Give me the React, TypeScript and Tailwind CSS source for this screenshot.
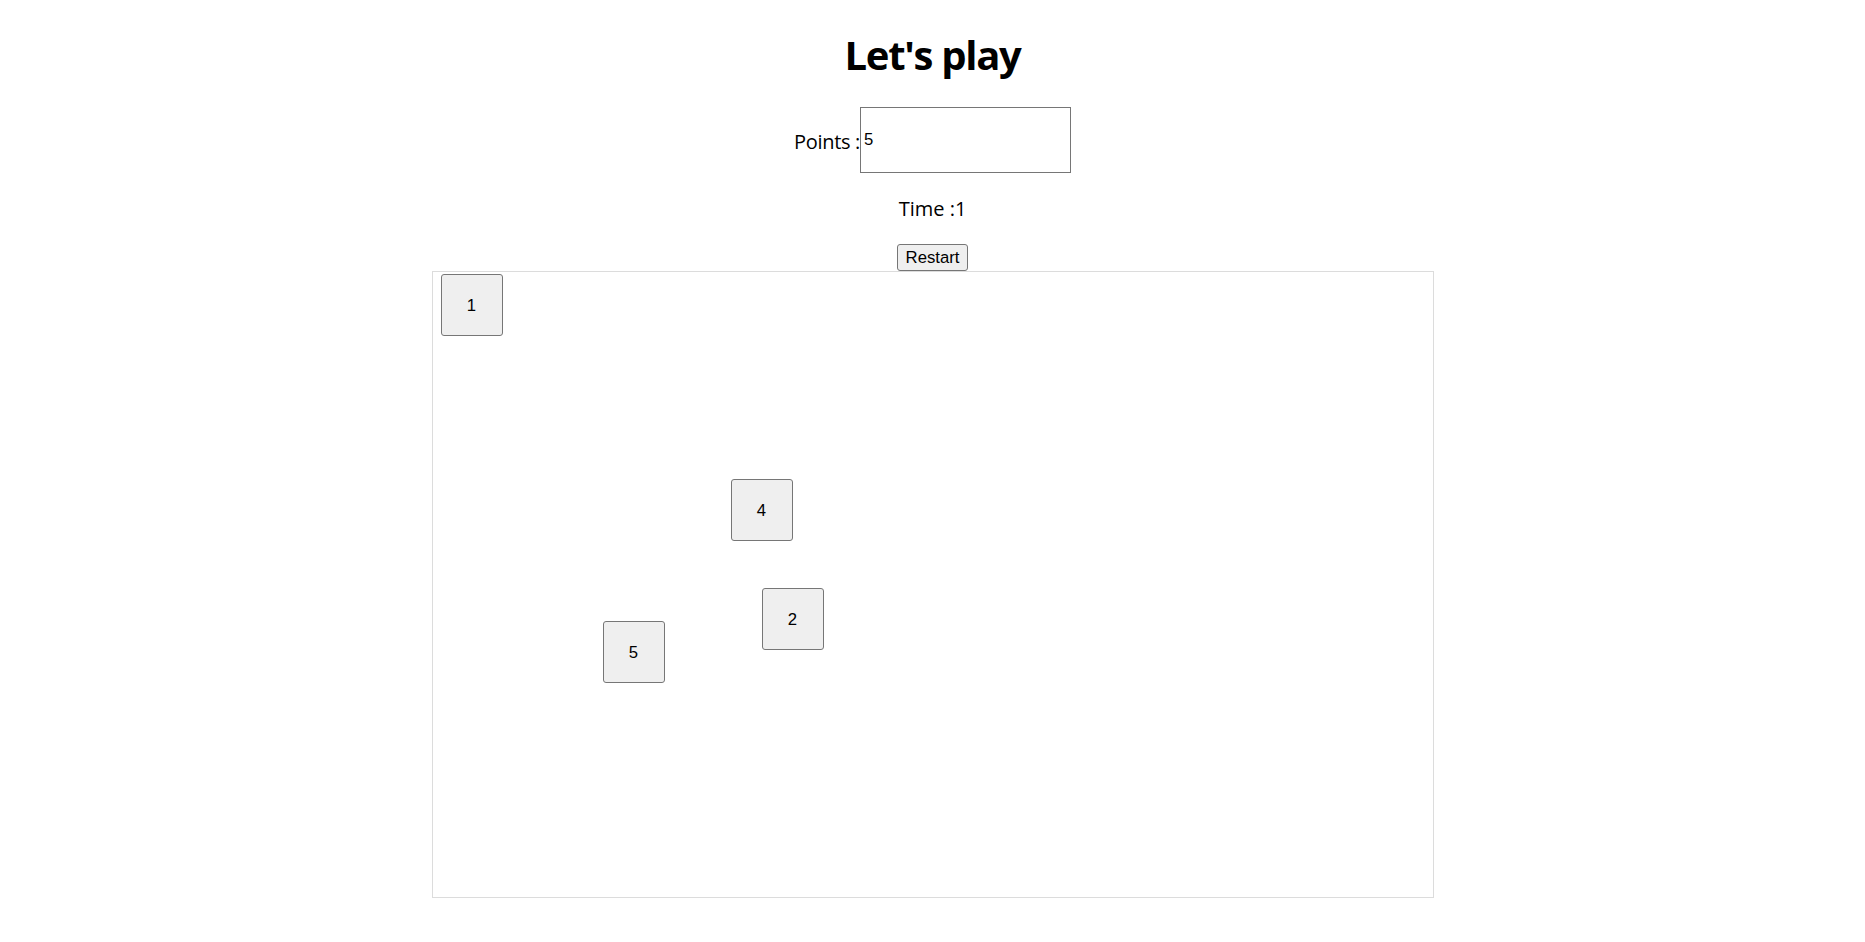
const tiles = [
  { n: 1, left: 8, top: 2 },
  { n: 4, left: 298, top: 207 },
  { n: 2, left: 329, top: 316 },
  { n: 5, left: 170, top: 349 },
];

export default function App() {
  return (
    <div className="flex flex-col items-center font-['Open_Sans',sans-serif] text-black bg-white min-h-screen">
      <h1 className="mt-[28px] text-[40px] font-bold leading-[54px] tracking-[-1.3px]">Let's play</h1>

      <div className="mt-[25px] flex items-center h-[66px]">
        <span className="mt-[4px] text-[20px] leading-[28px] tracking-[-0.3px]">Points :</span>
        <input
          defaultValue="5"
          className="w-[211px] h-[66px] border border-[#767676] px-[3px] text-[16.7px] font-['Liberation_Sans',sans-serif] outline-none"
        />
      </div>

      <p className="mt-[22px] text-[20px] leading-[28px]">Time :1</p>

      <button className="mt-[21px] h-[27px] px-[8px] border border-[#767676] bg-[#efefef] rounded-[3px] text-[16.7px] leading-[20px] font-['Liberation_Sans',sans-serif]">
        Restart
      </button>

      <div className="relative w-[1002px] h-[627px] border border-[#dcdcdc]">
        {tiles.map((t) => (
          <button
            key={t.n}
            className="absolute w-[62px] h-[62px] pt-[2px] border border-[#767676] bg-[#efefef] rounded-[3px] text-[16.7px] font-['Liberation_Sans',sans-serif] flex items-center justify-center"
            style={{ left: t.left, top: t.top }}
          >
            {t.n}
          </button>
        ))}
      </div>
    </div>
  );
}
